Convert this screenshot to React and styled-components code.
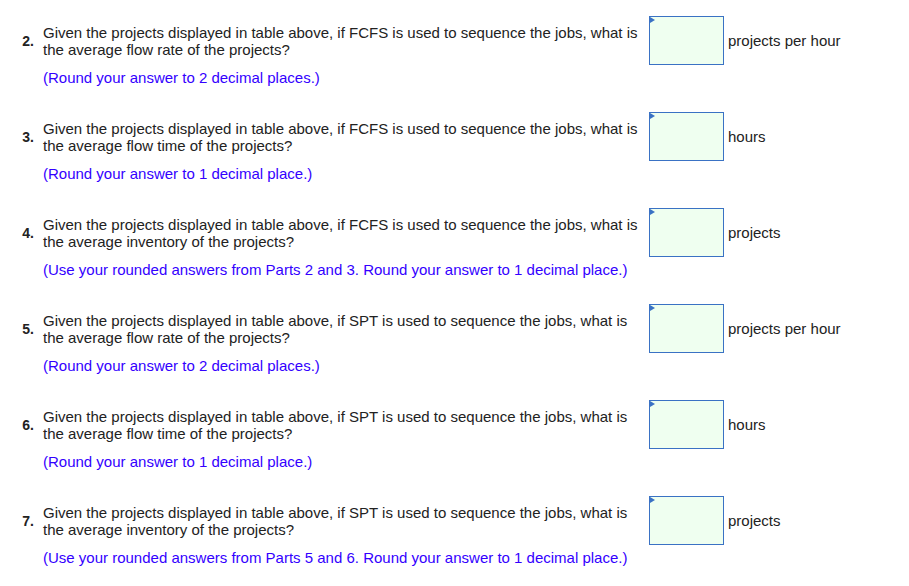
import styled, { createGlobalStyle } from "styled-components";

const GlobalStyle = createGlobalStyle`
    body {
        margin: 0;
        background: #fff;
        font-family: "Liberation Sans", Arial, sans-serif;
        color: #222;
    }
`;

const questions = [
    { n: 2, rule: "FCFS", what: "flow rate", hint: "(Round your answer to 2 decimal places.)", unit: "projects per hour" },
    { n: 3, rule: "FCFS", what: "flow time", hint: "(Round your answer to 1 decimal place.)", unit: "hours" },
    { n: 4, rule: "FCFS", what: "inventory", hint: "(Use your rounded answers from Parts 2 and 3. Round your answer to 1 decimal place.)", unit: "projects" },
    { n: 5, rule: "SPT", what: "flow rate", hint: "(Round your answer to 2 decimal places.)", unit: "projects per hour" },
    { n: 6, rule: "SPT", what: "flow time", hint: "(Round your answer to 1 decimal place.)", unit: "hours" },
    { n: 7, rule: "SPT", what: "inventory", hint: "(Use your rounded answers from Parts 5 and 6. Round your answer to 1 decimal place.)", unit: "projects" },
];

export default function App() {
    return (
        <>
            <GlobalStyle />
            <Page>
                {questions.map((q) => (
                    <Row key={q.n}>
                        <Number>{q.n}.</Number>
                        <Body>
                            <Question>
                                Given the projects displayed in table above, if {q.rule} is used to sequence the jobs, what is the average {q.what} of the projects?
                            </Question>
                            <Hint>{q.hint}</Hint>
                        </Body>
                        <AnswerBox>
                            <Marker />
                        </AnswerBox>
                        <Unit>{q.unit}</Unit>
                    </Row>
                ))}
            </Page>
        </>
    );
}

const Page = styled.div`
    padding: 16px 0 0 0;
`;

const Row = styled.div`
    display: grid;
    grid-template-columns: 43px 606px 75px auto;
    height: 96px;
    font-size: 15px;
    line-height: 17px;
`;

const Number = styled.div`
    font-weight: bold;
    font-size: 14px;
    text-align: right;
    padding: 17px 9px 0 0;
`;

const Body = styled.div`
    padding-top: 8px;
`;

const Question = styled.div`
    width: 600px;
`;

const Hint = styled.div`
    margin-top: 11px;
    color: #3300ff;
`;

const AnswerBox = styled.div`
    position: relative;
    height: 49px;
    box-sizing: border-box;
    border: 1px solid #3a72c4;
    background: #effff0;
`;

const Marker = styled.span`
    position: absolute;
    top: 0;
    left: 0;
    width: 0;
    height: 0;
    border-top: 3.5px solid transparent;
    border-bottom: 3.5px solid transparent;
    border-left: 5px solid #3a72c4;
`;

const Unit = styled.div`
    align-self: start;
    margin-top: 16px;
    padding-left: 4px;
`;
